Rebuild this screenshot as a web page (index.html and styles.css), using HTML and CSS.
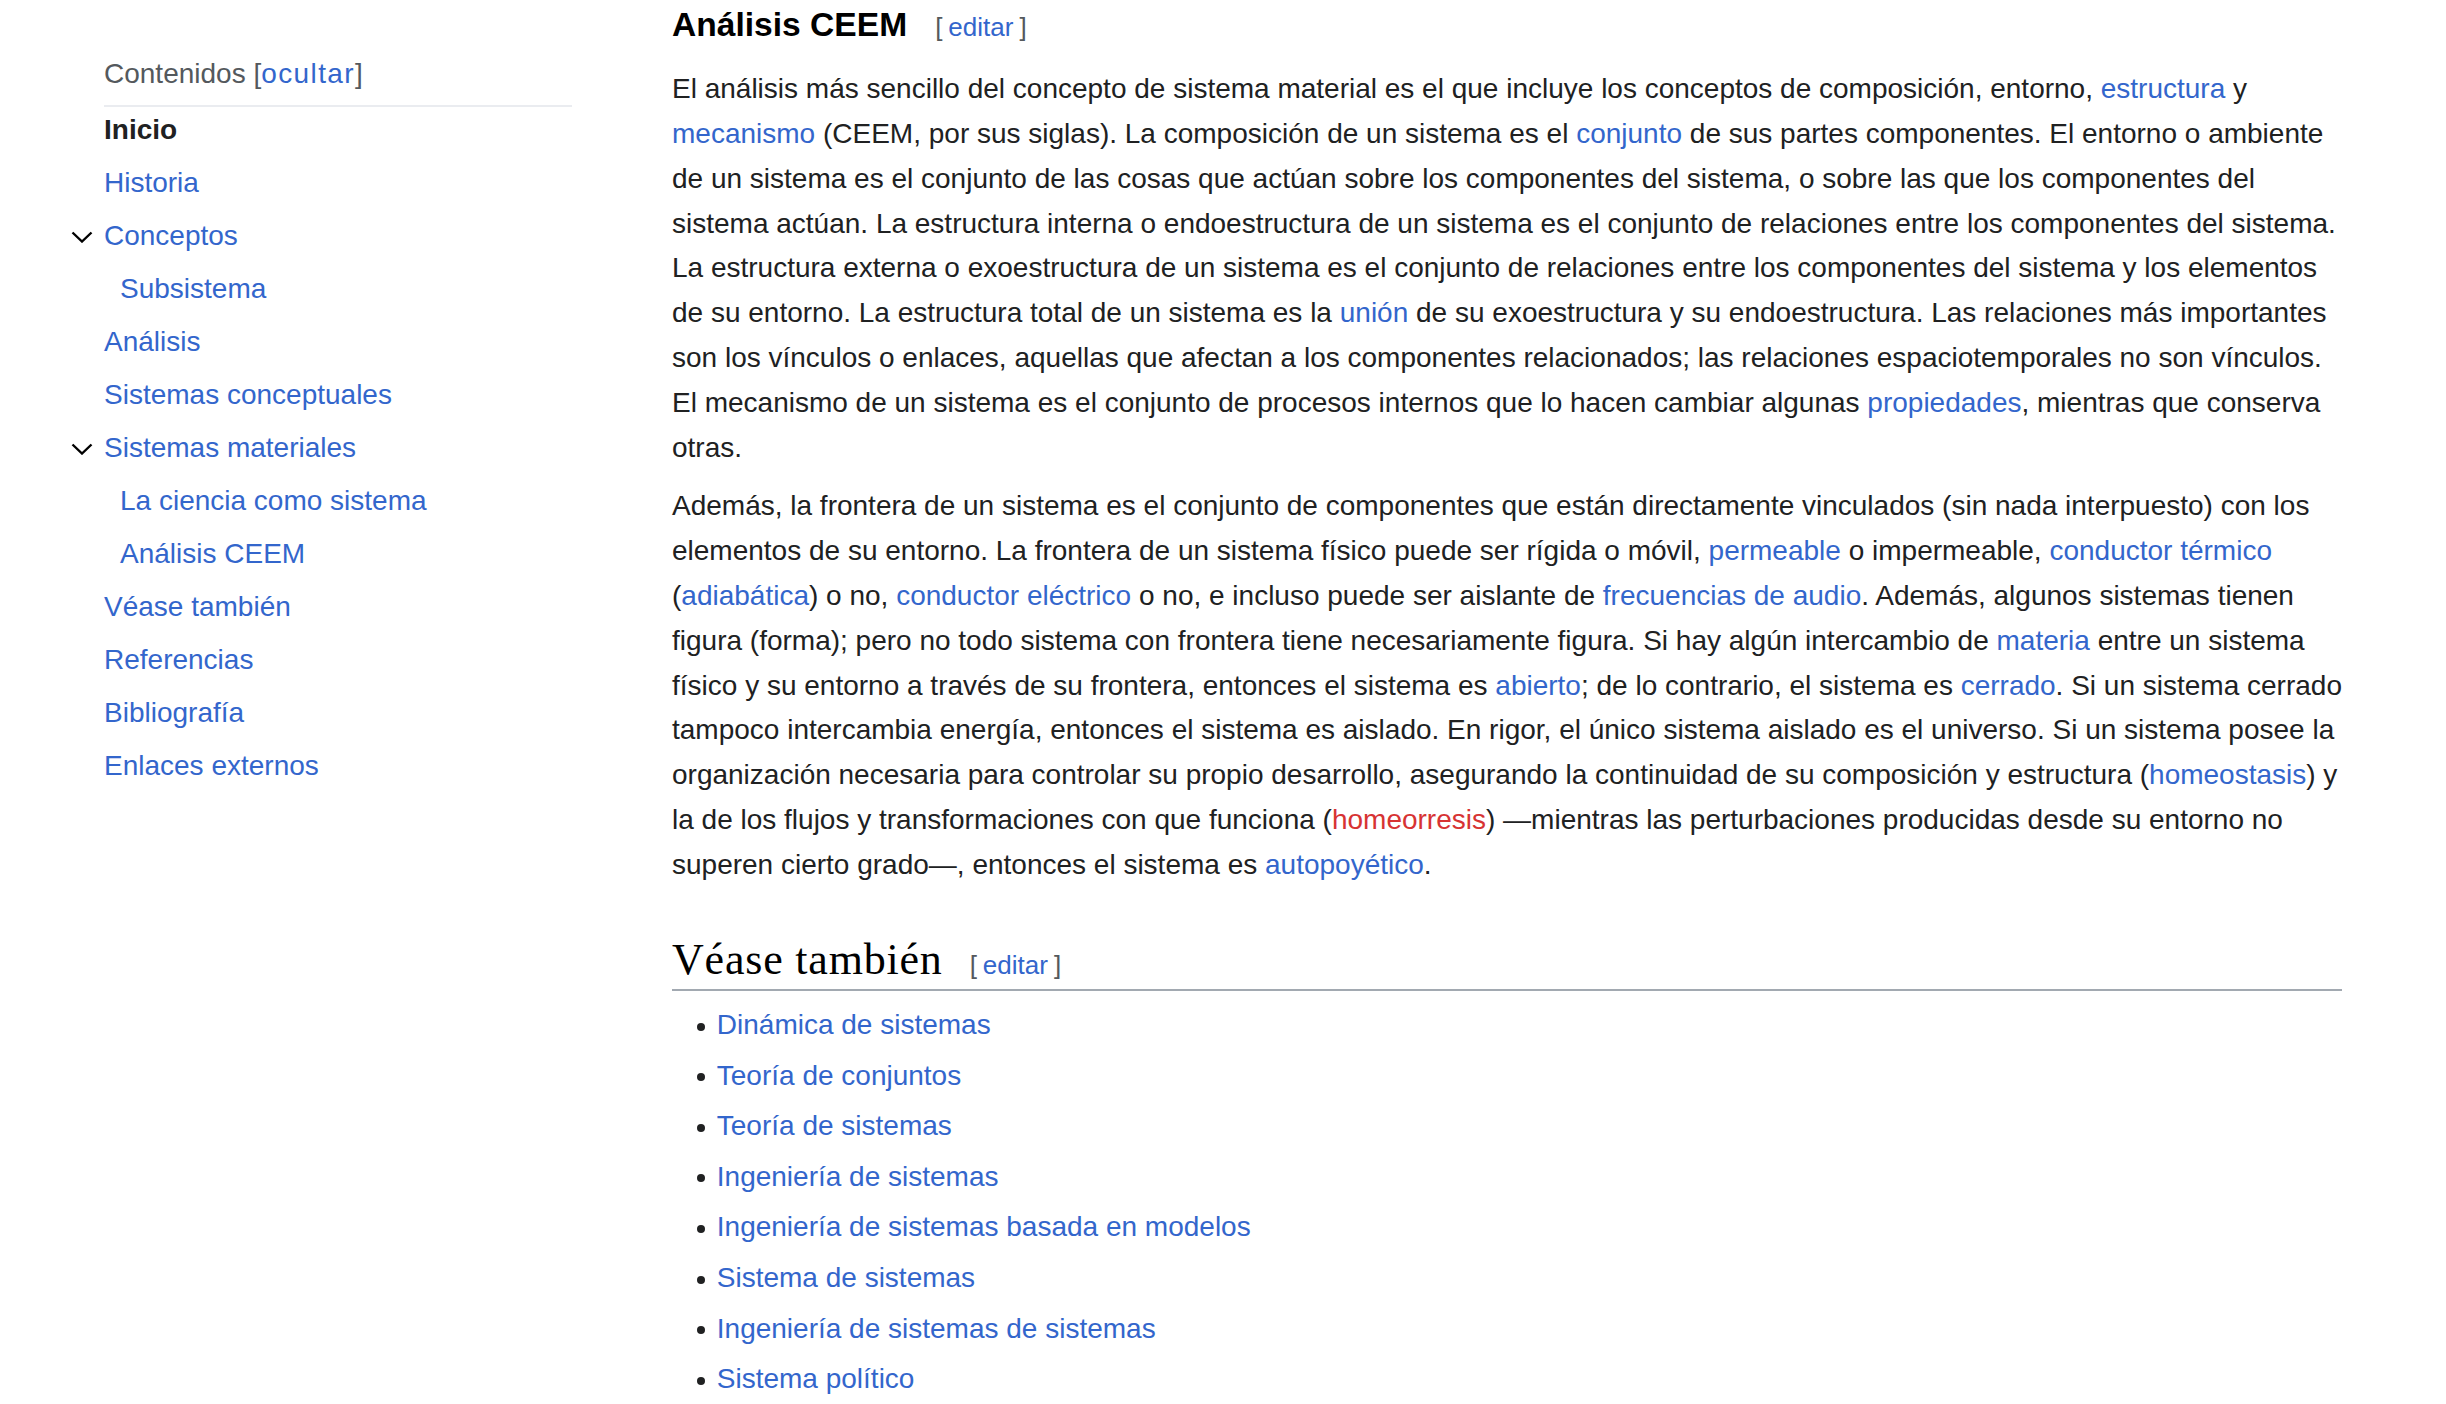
FILE: index.html
```html
<!DOCTYPE html>
<html lang="es">
<head>
<meta charset="utf-8">
<title>Sistema - Análisis CEEM</title>
<link rel="stylesheet" href="styles.css">
</head>
<body>
<div class="page">
  <nav class="toc">
    <div class="toc-header">Contenidos <span class="toc-bracket">[</span><a class="toc-toggle" href="#">ocultar</a><span class="toc-bracket">]</span></div>
    <ul class="toc-list">
      <li class="toc-item"><span class="toc-current">Inicio</span></li>
      <li class="toc-item"><a href="#">Historia</a></li>
      <li class="toc-item"><svg class="chev" width="22" height="12" viewBox="0 0 22 12"><polyline points="1.5,1.5 11,10.5 20.5,1.5" fill="none" stroke="#000" stroke-width="2.4"/></svg><a href="#">Conceptos</a></li>
      <li class="toc-item sub"><a href="#">Subsistema</a></li>
      <li class="toc-item"><a href="#">Análisis</a></li>
      <li class="toc-item"><a href="#">Sistemas conceptuales</a></li>
      <li class="toc-item"><svg class="chev" width="22" height="12" viewBox="0 0 22 12"><polyline points="1.5,1.5 11,10.5 20.5,1.5" fill="none" stroke="#000" stroke-width="2.4"/></svg><a href="#">Sistemas materiales</a></li>
      <li class="toc-item sub"><a href="#">La ciencia como sistema</a></li>
      <li class="toc-item sub"><a href="#">Análisis CEEM</a></li>
      <li class="toc-item"><a href="#">Véase también</a></li>
      <li class="toc-item"><a href="#">Referencias</a></li>
      <li class="toc-item"><a href="#">Bibliografía</a></li>
      <li class="toc-item"><a href="#">Enlaces externos</a></li>
    </ul>
  </nav>
  <main class="content">
    <h3 class="h3">Análisis CEEM<span class="editsection"><span class="bracket">[</span><a href="#">editar</a><span class="bracket">]</span></span></h3>
    <p>El análisis más sencillo del concepto de sistema material es el que incluye los conceptos de composición, entorno, <a href="#">estructura</a> y <a href="#">mecanismo</a> (CEEM, por sus siglas). La composición de un sistema es el <a href="#">conjunto</a> de sus partes componentes. El entorno o ambiente de un sistema es el conjunto de las cosas que actúan sobre los componentes del sistema, o sobre las que los componentes del sistema actúan. La estructura interna o endoestructura de un sistema es el conjunto de relaciones entre los componentes del sistema. La estructura externa o exoestructura de un sistema es el conjunto de relaciones entre los componentes del sistema y los elementos de su entorno. La estructura total de un sistema es la <a href="#">unión</a> de su exoestructura y su endoestructura. Las relaciones más importantes son los vínculos o enlaces, aquellas que afectan a los componentes relacionados; las relaciones espaciotemporales no son vínculos. El mecanismo de un sistema es el conjunto de procesos internos que lo hacen cambiar algunas <a href="#">propiedades</a>, mientras que conserva otras.</p>
    <p>Además, la frontera de un sistema es el conjunto de componentes que están directamente vinculados (sin nada interpuesto) con los elementos de su entorno. La frontera de un sistema físico puede ser rígida o móvil, <a href="#">permeable</a> o impermeable, <a href="#">conductor térmico</a> (<a href="#">adiabática</a>) o no, <a href="#">conductor eléctrico</a> o no, e incluso puede ser aislante de <a href="#">frecuencias de audio</a>. Además, algunos sistemas tienen figura (forma); pero no todo sistema con frontera tiene necesariamente figura. Si hay algún intercambio de <a href="#">materia</a> entre un sistema físico y su entorno a través de su frontera, entonces el sistema es <a href="#">abierto</a>; de lo contrario, el sistema es <a href="#">cerrado</a>. Si un sistema cerrado tampoco intercambia energía, entonces el sistema es aislado. En rigor, el único sistema aislado es el universo. Si un sistema posee la organización necesaria para controlar su propio desarrollo, asegurando la continuidad de su composición y estructura (<a href="#">homeostasis</a>) y la de los flujos y transformaciones con que funciona (<a class="new" href="#">homeorresis</a>) —mientras las perturbaciones producidas desde su entorno no superen cierto grado—, entonces el sistema es <a href="#">autopoyético</a>.</p>
    <h2 class="h2">Véase también<span class="editsection"><span class="bracket">[</span><a href="#">editar</a><span class="bracket">]</span></span></h2>
    <ul class="see-also">
      <li><a href="#">Dinámica de sistemas</a></li>
      <li><a href="#">Teoría de conjuntos</a></li>
      <li><a href="#">Teoría de sistemas</a></li>
      <li><a href="#">Ingeniería de sistemas</a></li>
      <li><a href="#">Ingeniería de sistemas basada en modelos</a></li>
      <li><a href="#">Sistema de sistemas</a></li>
      <li><a href="#">Ingeniería de sistemas de sistemas</a></li>
      <li><a href="#">Sistema político</a></li>
    </ul>
  </main>
</div>
</body>
</html>
```

FILE: styles.css
```css
html, body {
  margin: 0;
  padding: 0;
  background: #ffffff;
}

body {
  font-family: "Liberation Sans", Arial, Helvetica, sans-serif;
  font-size: 28px;
  color: #202122;
  overflow: hidden;
}

a {
  color: #3366cc;
  text-decoration: none;
}

a.new {
  color: #d73333;
}

.page {
  display: flex;
  align-items: flex-start;
  gap: 100px;
  padding-left: 104px;
}

/* ---------- Table of contents ---------- */
.toc {
  width: 468px;
  flex: none;
  padding-top: 51px;
}

.toc-header {
  line-height: 45px;
  padding-bottom: 9px;
  border-bottom: 2px solid #eaecf0;
  color: #54595d;
}

.toc-bracket {
  color: #54595d;
}

.toc-toggle {
  letter-spacing: 1.4px;
}

.toc-list {
  list-style: none;
  margin: 0;
  padding: 0;
}

.toc-item {
  display: flex;
  align-items: flex-start;
  line-height: 45px;
  padding-bottom: 8px;
}

.toc-item.sub {
  padding-left: 16px;
}

.toc-current {
  font-weight: bold;
  color: #202122;
}

.chev {
  flex: none;
  margin-left: -33px;
  margin-right: 11px;
  margin-top: 18px;
}

/* ---------- Content ---------- */
.content {
  width: 1670px;
  flex: none;
}

.h3 {
  font-size: 33.6px;
  font-weight: bold;
  line-height: 1.6;
  color: #000;
  margin: -2px 0 0;
}

.editsection {
  font-size: 26px;
  font-weight: normal;
  font-family: "Liberation Sans", Arial, sans-serif;
  margin-left: 28px;
  letter-spacing: 0;
}

.bracket {
  color: #54595d;
}

.editsection a {
  margin: 0 6px;
}

.content p {
  margin: 15.5px 0 0;
  line-height: 44.8px;
}

.content p + p {
  margin-top: 14px;
}

.h2 {
  font-family: "Liberation Serif", "Times New Roman", serif;
  font-size: 44px;
  font-weight: normal;
  line-height: 48px;
  letter-spacing: 0.8px;
  color: #000;
  margin: 48px 0 0;
  border-bottom: 2px solid #a2a9b1;
}

.h2 .editsection {
  margin-left: 27px;
}

.see-also {
  list-style: none;
  margin: 12.5px 0 0 44.8px;
  padding: 0;
}

.see-also li {
  line-height: 44.8px;
  margin-bottom: 5.8px;
}

.see-also li::before {
  content: "";
  display: inline-block;
  width: 8px;
  height: 8px;
  border-radius: 50%;
  background: #202122;
  margin-left: -20px;
  margin-right: 12px;
  vertical-align: middle;
}
```
